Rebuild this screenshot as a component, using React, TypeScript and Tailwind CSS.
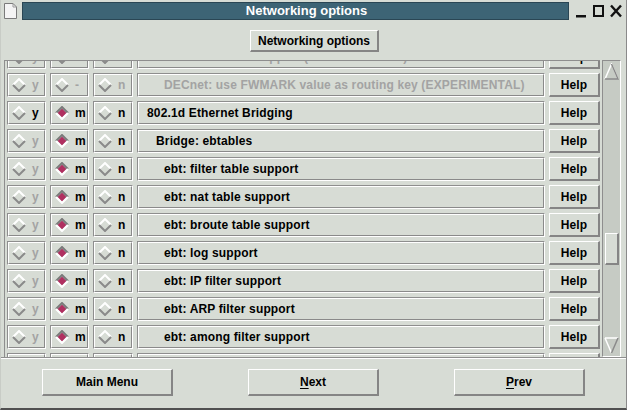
import React from 'react';

type Row = {
  label: string;
  indent: 0 | 1 | 2;
  disabled?: boolean;
  yOn?: boolean; // y column usable
  mid: 'm' | '-';
  sel: 'y' | 'm' | 'n' | null;
};

const ROWS: Row[] = [
  { label: 'DECnet: router support (EXPERIMENTAL)', indent: 2, disabled: true, mid: '-', sel: null },
  { label: 'DECnet: use FWMARK value as routing key (EXPERIMENTAL)', indent: 2, disabled: true, mid: '-', sel: null },
  { label: '802.1d Ethernet Bridging', indent: 0, yOn: true, mid: 'm', sel: 'm' },
  { label: 'Bridge: ebtables', indent: 1, mid: 'm', sel: 'm' },
  { label: 'ebt: filter table support', indent: 2, mid: 'm', sel: 'm' },
  { label: 'ebt: nat table support', indent: 2, mid: 'm', sel: 'm' },
  { label: 'ebt: broute table support', indent: 2, mid: 'm', sel: 'm' },
  { label: 'ebt: log support', indent: 2, mid: 'm', sel: 'm' },
  { label: 'ebt: IP filter support', indent: 2, mid: 'm', sel: 'm' },
  { label: 'ebt: ARP filter support', indent: 2, mid: 'm', sel: 'm' },
  { label: 'ebt: among filter support', indent: 2, mid: 'm', sel: 'm' },
  { label: 'ebt: limit filter support', indent: 2, mid: 'm', sel: 'm' },
];

const INDENT = ['pl-[8px]', 'pl-[17px]', 'pl-[25px]'];

function Diamond({ on }: { on: boolean }) {
  return (
    <svg width="14" height="14" viewBox="0 0 14 14" className="shrink-0">
      {on && <polygon points="7,2.5 11.5,7 7,11.5 2.5,7" fill="#b03060" />}
      <polyline
        points="1,7 7,1 13,7"
        fill="none"
        stroke={on ? '#7a7a7a' : '#ffffff'}
        strokeWidth="2"
      />
      <polyline
        points="1,7 7,13 13,7"
        fill="none"
        stroke={on ? '#ffffff' : '#8a8a8a'}
        strokeWidth="2"
      />
    </svg>
  );
}

// sunken table frame with a raised button inside
function Cell({ children, className = '' }: { children?: React.ReactNode; className?: string }) {
  return (
    <div className="h-[24px] border border-t-[#8e8e8e] border-l-[#8e8e8e] border-b-white border-r-white">
      <div
        className={`h-full border border-t-white border-l-white border-b-[#8a8a8a] border-r-[#8a8a8a] flex items-center ${className}`}
      >
        {children}
      </div>
    </div>
  );
}

function Choice({ letter, on, grey }: { letter: string; on: boolean; grey: boolean }) {
  return (
    <Cell className="pl-[3px] gap-[6px]">
      <Diamond on={on} />
      <span className={grey ? 'text-[#a3a3a3]' : 'text-black'}>{letter}</span>
    </Cell>
  );
}

function Button({ children, className = '' }: { children: React.ReactNode; className?: string }) {
  return (
    <div
      className={`flex items-center justify-center border-t border-l border-t-white border-l-white border-b-2 border-r-2 border-b-[#858585] border-r-[#858585] bg-[#d7dcd5] text-black ${className}`}
    >
      {children}
    </div>
  );
}

export default function App() {
  return (
    <div className="w-[627px] h-[410px] bg-[#d7dcd5] font-['Liberation_Sans',Arial,sans-serif] text-[12px] font-bold flex flex-col border-b-2 border-b-[#505050] border-r border-r-[#8a8a8a] border-l border-l-[#c8ccc6] overflow-hidden">
      {/* title bar */}
      <div className="h-[20px] flex items-center pl-[3px] pr-[4px] pt-[1px]">
        <svg width="13" height="16" viewBox="0 0 13 16" className="shrink-0">
          <path d="M0.5 0.5 H9 L12.5 4 V15.5 H0.5 Z" fill="#f4f4f4" stroke="#7a7a7a" />
          <path d="M9 0.5 V4 H12.5" fill="none" stroke="#9a9a9a" />
        </svg>
        <div className="ml-[5px] h-[18px] w-[548px] bg-[#3d6475] border border-[#2a4654] flex items-center justify-center pl-[22px] text-white text-[13px]">
          Networking options
        </div>
        <div className="flex items-center gap-[6px] ml-[6px]">
          <svg width="12" height="14" viewBox="0 0 12 14">
            <rect x="1" y="11" width="10" height="2.5" fill="#111" />
          </svg>
          <svg width="11" height="14" viewBox="0 0 11 14">
            <rect x="1" y="2" width="9" height="10" fill="none" stroke="#111" strokeWidth="2" />
          </svg>
          <svg width="12" height="14" viewBox="0 0 12 14">
            <path d="M1 1.5 L11 12.5 M11 1.5 L1 12.5" stroke="#111" strokeWidth="2.4" />
          </svg>
        </div>
      </div>

      {/* header button */}
      <div className="flex justify-center pt-[10px] pl-[2px]">
        <Button className="w-[129px] h-[22px]">Networking options</Button>
      </div>

      {/* scrolled list */}
      <div className="mt-[8px] ml-[3px] mr-[5px] h-[297px] flex gap-[2px]">
        <div className="flex-1 overflow-hidden border-l border-t border-l-[#8e8e8e] border-t-[#8e8e8e]">
          <div className="-mt-[16px] ml-[2px] flex flex-col gap-[4px] tracking-[0.15px]">
            {ROWS.map((r, i) => {
              const grey = !!r.disabled;
              return (
                <div
                  key={i}
                  className="grid grid-cols-[39px_39px_40px_408px_51px] gap-[4px]"
                >
                  <Choice letter="y" on={r.sel === 'y'} grey={grey || !r.yOn} />
                  <Choice letter={r.mid} on={r.sel === 'm'} grey={grey} />
                  <Choice letter="n" on={r.sel === 'n'} grey={grey} />
                  <Cell className={`${INDENT[r.indent]} whitespace-nowrap overflow-hidden`}>
                    <span className={grey ? 'text-[#a3a3a3]' : 'text-black'}>{r.label}</span>
                  </Cell>
                  <div className="h-[24px] border-t border-l border-t-white border-l-white border-b-2 border-r-2 border-b-[#858585] border-r-[#858585] flex items-center justify-center">
                    Help
                  </div>
                </div>
              );
            })}
          </div>
        </div>

        {/* scrollbar */}
        <div className="w-[19px] bg-[#c6cbc4] border border-t-[#8e8e8e] border-l-[#8e8e8e] border-b-white border-r-white flex flex-col items-center py-[2px]">
          <svg width="15" height="17" viewBox="0 0 15 17" className="shrink-0">
            <path d="M1 16 L7.5 1 L14 16" fill="none" stroke="#ffffff" strokeWidth="1.5" />
            <path d="M7.5 1 L14 16 H1" fill="none" stroke="#8a8a8a" strokeWidth="1.5" />
          </svg>
          <div className="flex-1 w-full flex flex-col items-center">
            <div className="h-[153px] shrink-0" />
            <div className="w-[14px] h-[32px] bg-[#d7dcd5] border-t border-l border-t-white border-l-white border-b-2 border-r-2 border-b-[#858585] border-r-[#858585]" />
          </div>
          <svg width="15" height="17" viewBox="0 0 15 17" className="shrink-0">
            <path d="M1 1 H14" fill="none" stroke="#ffffff" strokeWidth="1.5" />
            <path d="M1 1 L7.5 16" fill="none" stroke="#ffffff" strokeWidth="1.5" />
            <path d="M7.5 16 L14 1" fill="none" stroke="#8a8a8a" strokeWidth="1.5" />
          </svg>
        </div>
      </div>

      {/* separator */}
      <div className="h-[2px] border-t border-t-[#8e8e8e] border-b border-b-white" />

      {/* bottom buttons */}
      <div className="flex justify-between px-[41px] pt-[10px]">
        <Button className="w-[131px] h-[27px]">Main Menu</Button>
        <Button className="w-[131px] h-[27px]">
          <span>
            <span className="underline underline-offset-2">N</span>ext
          </span>
        </Button>
        <Button className="w-[131px] h-[27px]">
          <span>
            <span className="underline underline-offset-2">P</span>rev
          </span>
        </Button>
      </div>
    </div>
  );
}
